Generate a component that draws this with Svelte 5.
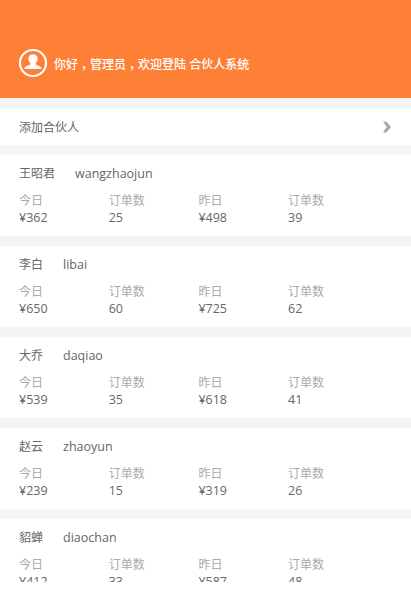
<script>
  const partners = [
    { name: '王昭君', pinyin: 'wangzhaojun', today: 362, todayOrders: 25, yesterday: 498, yesterdayOrders: 39 },
    { name: '李白', pinyin: 'libai', today: 650, todayOrders: 60, yesterday: 725, yesterdayOrders: 62 },
    { name: '大乔', pinyin: 'daqiao', today: 539, todayOrders: 35, yesterday: 618, yesterdayOrders: 41 },
    { name: '赵云', pinyin: 'zhaoyun', today: 239, todayOrders: 15, yesterday: 319, yesterdayOrders: 26 },
    { name: '貂蝉', pinyin: 'diaochan', today: 412, todayOrders: 33, yesterday: 587, yesterdayOrders: 48 }
  ];
</script>

<div class="page">
  <header class="hero">
    <svg class="avatar" width="30" height="30" viewBox="0 0 30 30" aria-hidden="true">
      <circle cx="15" cy="15" r="13" fill="none" stroke="#fff" stroke-width="2.2" />
      <path transform="translate(15 14) scale(1.12 1) translate(-15 -15)" d="M15 7.200c-2.600 0-4.200 2-4.200 4.600 0 1.900.8 3.400 1.900 4.400v1.300c-1.600.9-4.600 1.500-5.200 3.600-.1.400.1.900.6.900h13.800c.5 0 .7-.5.6-.9-.6-2.100-3.600-2.700-5.200-3.600v-1.300c1.100-1 1.900-2.500 1.900-4.400 0-2.600-1.600-4.600-4.200-4.600z" fill="#fff" />
    </svg>
    <span class="greeting">你好<span class="comma">，</span>管理员<span class="comma">，</span>欢迎登陆 合伙人系统</span>
  </header>

  <div class="add-row">
    <span>添加合伙人</span>
    <svg width="10" height="12" viewBox="0 0 10 12" aria-hidden="true">
      <path d="M1 0.500h3.200L9 6l-4.800 5.500H1L4.800 6z" fill="#a6a6a6" />
    </svg>
  </div>

  {#each partners as p}
    <section class="card">
      <div class="who"><span>{p.name}</span><span class="latin">{p.pinyin}</span></div>
      <div class="stats">
        <div><span class="label">今日</span><span class="value">¥{p.today}</span></div>
        <div><span class="label">订单数</span><span class="value">{p.todayOrders}</span></div>
        <div><span class="label">昨日</span><span class="value">¥{p.yesterday}</span></div>
        <div><span class="label">订单数</span><span class="value">{p.yesterdayOrders}</span></div>
      </div>
    </section>
  {/each}
</div>

<style>
  :global(body) {
    margin: 0;
    background: #fff;
  }
  .page {
    height: 582px;
    overflow: hidden;
    background: #f5f5f5;
    font-family: "Open Sans", "Noto Sans CJK SC", sans-serif;
    font-size: 12px;
    color: #666;
  }
  .hero {
    height: 98px;
    box-sizing: border-box;
    padding: 48px 19px 0;
    display: flex;
    align-items: flex-start;
    gap: 6px;
    background: #fe7f36;
  }
  .avatar {
    flex: none;
    margin-left: -1px;
  }
  .greeting {
    padding-top: 2px;
    font-size: 12px;
    line-height: 30px;
    color: #fff;
    font-weight: 500;
  }
  .comma {
    margin: 0 1px 0 3px;
    letter-spacing: -4px;
  }
  .add-row {
    height: 37px;
    margin-top: 10px;
    padding: 0 19px;
    display: flex;
    align-items: center;
    justify-content: space-between;
    background: #fff;
  }
  .card {
    height: 81px;
    box-sizing: border-box;
    margin-top: 10px;
    padding: 10px 19px 0;
    background: #fff;
  }
  .who {
    display: flex;
    gap: 20px;
    height: 18px;
    line-height: 18px;
  }
  .latin {
    font-size: 12.5px;
  }
  .stats {
    display: grid;
    grid-template-columns: repeat(4, 89.700px);
    margin-top: 9px;
  }
  .stats div {
    display: flex;
    flex-direction: column;
  }
  .label {
    line-height: 17px;
    color: #aaa;
  }
  .value {
    line-height: 17px;
    font-size: 12.5px;
  }
</style>
